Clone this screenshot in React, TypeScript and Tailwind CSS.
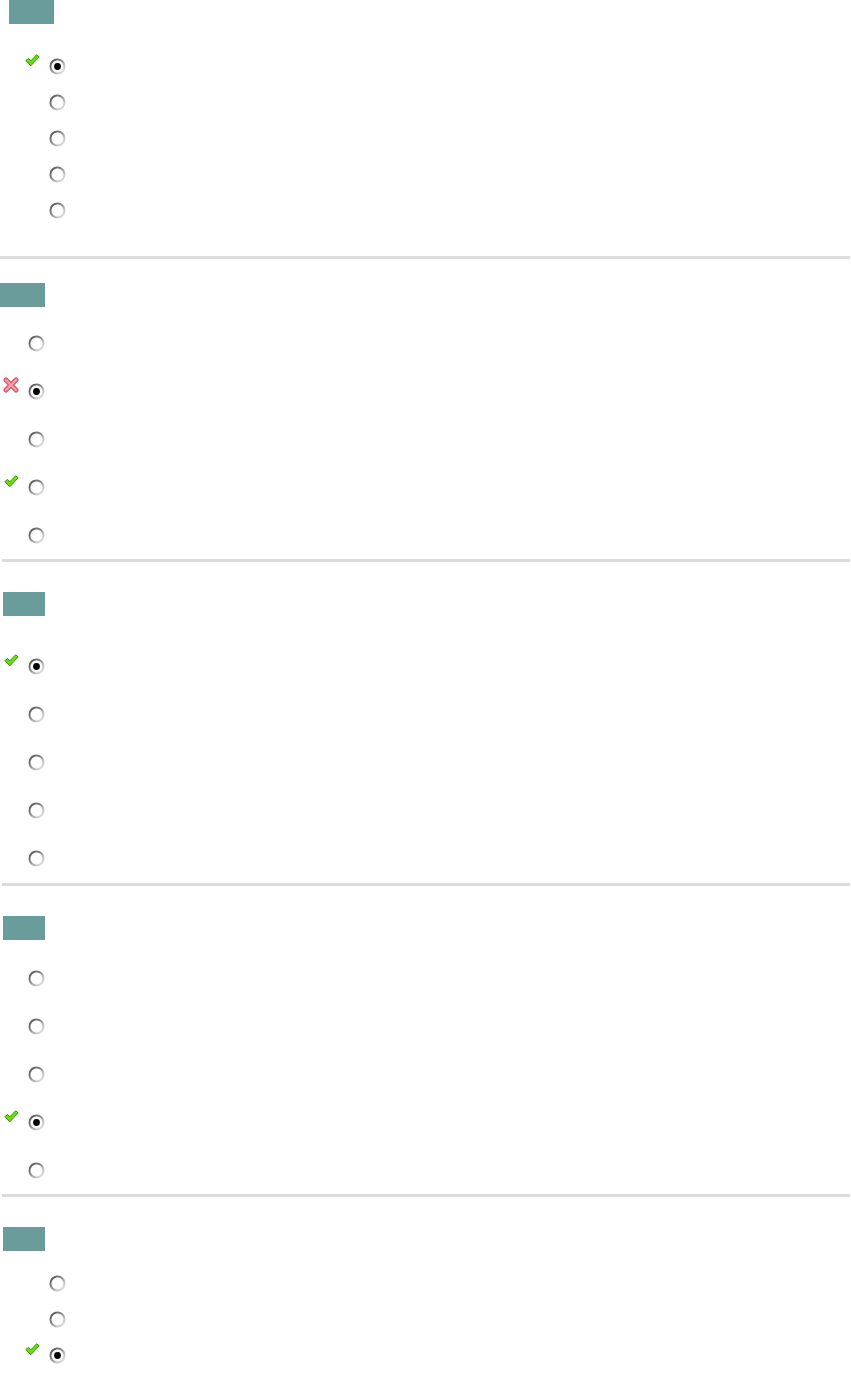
import { useId } from "react";

type Row = { checked?: boolean; mark?: "ok" | "bad" };

const Q1: Row[] = [{ checked: true, mark: "ok" }, {}, {}, {}, {}];
const Q2: Row[] = [{}, { checked: true, mark: "bad" }, {}, { mark: "ok" }, {}];
const Q3: Row[] = [{ checked: true, mark: "ok" }, {}, {}, {}, {}];
const Q4: Row[] = [{}, {}, {}, { checked: true, mark: "ok" }, {}];
const Q5: Row[] = [{}, {}, { checked: true, mark: "ok" }];

function Radio({ checked }: { checked?: boolean }) {
  const id = useId();
  return (
    <svg width="17" height="17" viewBox="0 0 17 17" className="shrink-0">
      <defs>
        <linearGradient id={id} x1="0.1" y1="0.1" x2="0.9" y2="0.9">
          <stop offset="0" stopColor="#5a5a5a" />
          <stop offset="0.5" stopColor="#9a9a9a" />
          <stop offset="1" stopColor="#e2e2e2" />
        </linearGradient>
      </defs>
      <circle cx="8.5" cy="8.5" r="7" fill="#fff" stroke={`url(#${id})`} strokeWidth="2.1" />
      <circle cx="8.5" cy="8.5" r="5.4" fill="none" stroke="#f4f4f4" strokeWidth="0.8" />
      {checked && <circle cx="8.5" cy="8.5" r="3.4" fill="#000" />}
    </svg>
  );
}

function Check() {
  return (
    <svg width="15" height="13" viewBox="0 0 15 13">
      <polygon
        points="0.8,6.6 3.6,4.4 5.8,6.9 11.6,0.8 14.2,2.8 5.8,11.8"
        fill="#66dd11"
        stroke="#3c9600"
        strokeWidth="1"
        strokeLinejoin="round"
      />
    </svg>
  );
}

function Cross() {
  return (
    <svg width="16" height="16" viewBox="0 0 16 16">
      <g strokeLinecap="round">
        <line x1="3" y1="3" x2="13" y2="13" stroke="#d65a6a" strokeWidth="5" />
        <line x1="13" y1="3" x2="3" y2="13" stroke="#d65a6a" strokeWidth="5" />
        <line x1="3" y1="3" x2="13" y2="13" stroke="#f0a0aa" strokeWidth="2.4" />
        <line x1="13" y1="3" x2="3" y2="13" stroke="#f0a0aa" strokeWidth="2.4" />
      </g>
    </svg>
  );
}

function Options({ rows, wide }: { rows: Row[]; wide?: boolean }) {
  return (
    <div className="flex flex-col">
      {rows.map((r, i) => (
        <div
          key={i}
          className={wide ? "flex h-[36px] items-center pl-[24px]" : "flex h-[48px] items-center pl-[3px]"}
        >
          <div className="mb-[12px] flex h-[16px] w-[16px] items-center justify-center">
            {r.mark === "ok" && <Check />}
            {r.mark === "bad" && <Cross />}
          </div>
          <div className="ml-[9px]">
            <Radio checked={r.checked} />
          </div>
        </div>
      ))}
    </div>
  );
}

function Tag({ className }: { className: string }) {
  return <div className={`h-[24px] bg-[#6a9c9c] ${className}`} />;
}

function Rule({ className = "" }: { className?: string }) {
  return <div className={`h-[3px] bg-[#dcdcdc] ${className}`} />;
}

export default function App() {
  return (
    <div className="flex min-h-[1374px] w-[851px] flex-col bg-white font-['Liberation_Sans',Arial,sans-serif]">
      <Tag className="ml-[9px] w-[45px]" />
      <div className="mt-[24px]">
        <Options rows={Q1} wide />
      </div>
      <Rule className="mt-[28px] mr-[1px]" />

      <Tag className="mt-[24px] w-[45px]" />
      <div className="mt-[12px]">
        <Options rows={Q2} />
      </div>
      <Rule className="ml-[2px] mr-[1px]" />

      <Tag className="mt-[30px] ml-[3px] w-[42px]" />
      <div className="mt-[26px]">
        <Options rows={Q3} />
      </div>
      <Rule className="mt-[1px] ml-[2px] mr-[1px]" />

      <Tag className="mt-[30px] ml-[3px] w-[42px]" />
      <div className="mt-[14px]">
        <Options rows={Q4} />
      </div>
      <Rule className="ml-[2px] mr-[1px]" />

      <Tag className="mt-[30px] ml-[3px] w-[42px]" />
      <div className="mt-[14px]">
        <Options rows={Q5} wide />
      </div>
    </div>
  );
}
